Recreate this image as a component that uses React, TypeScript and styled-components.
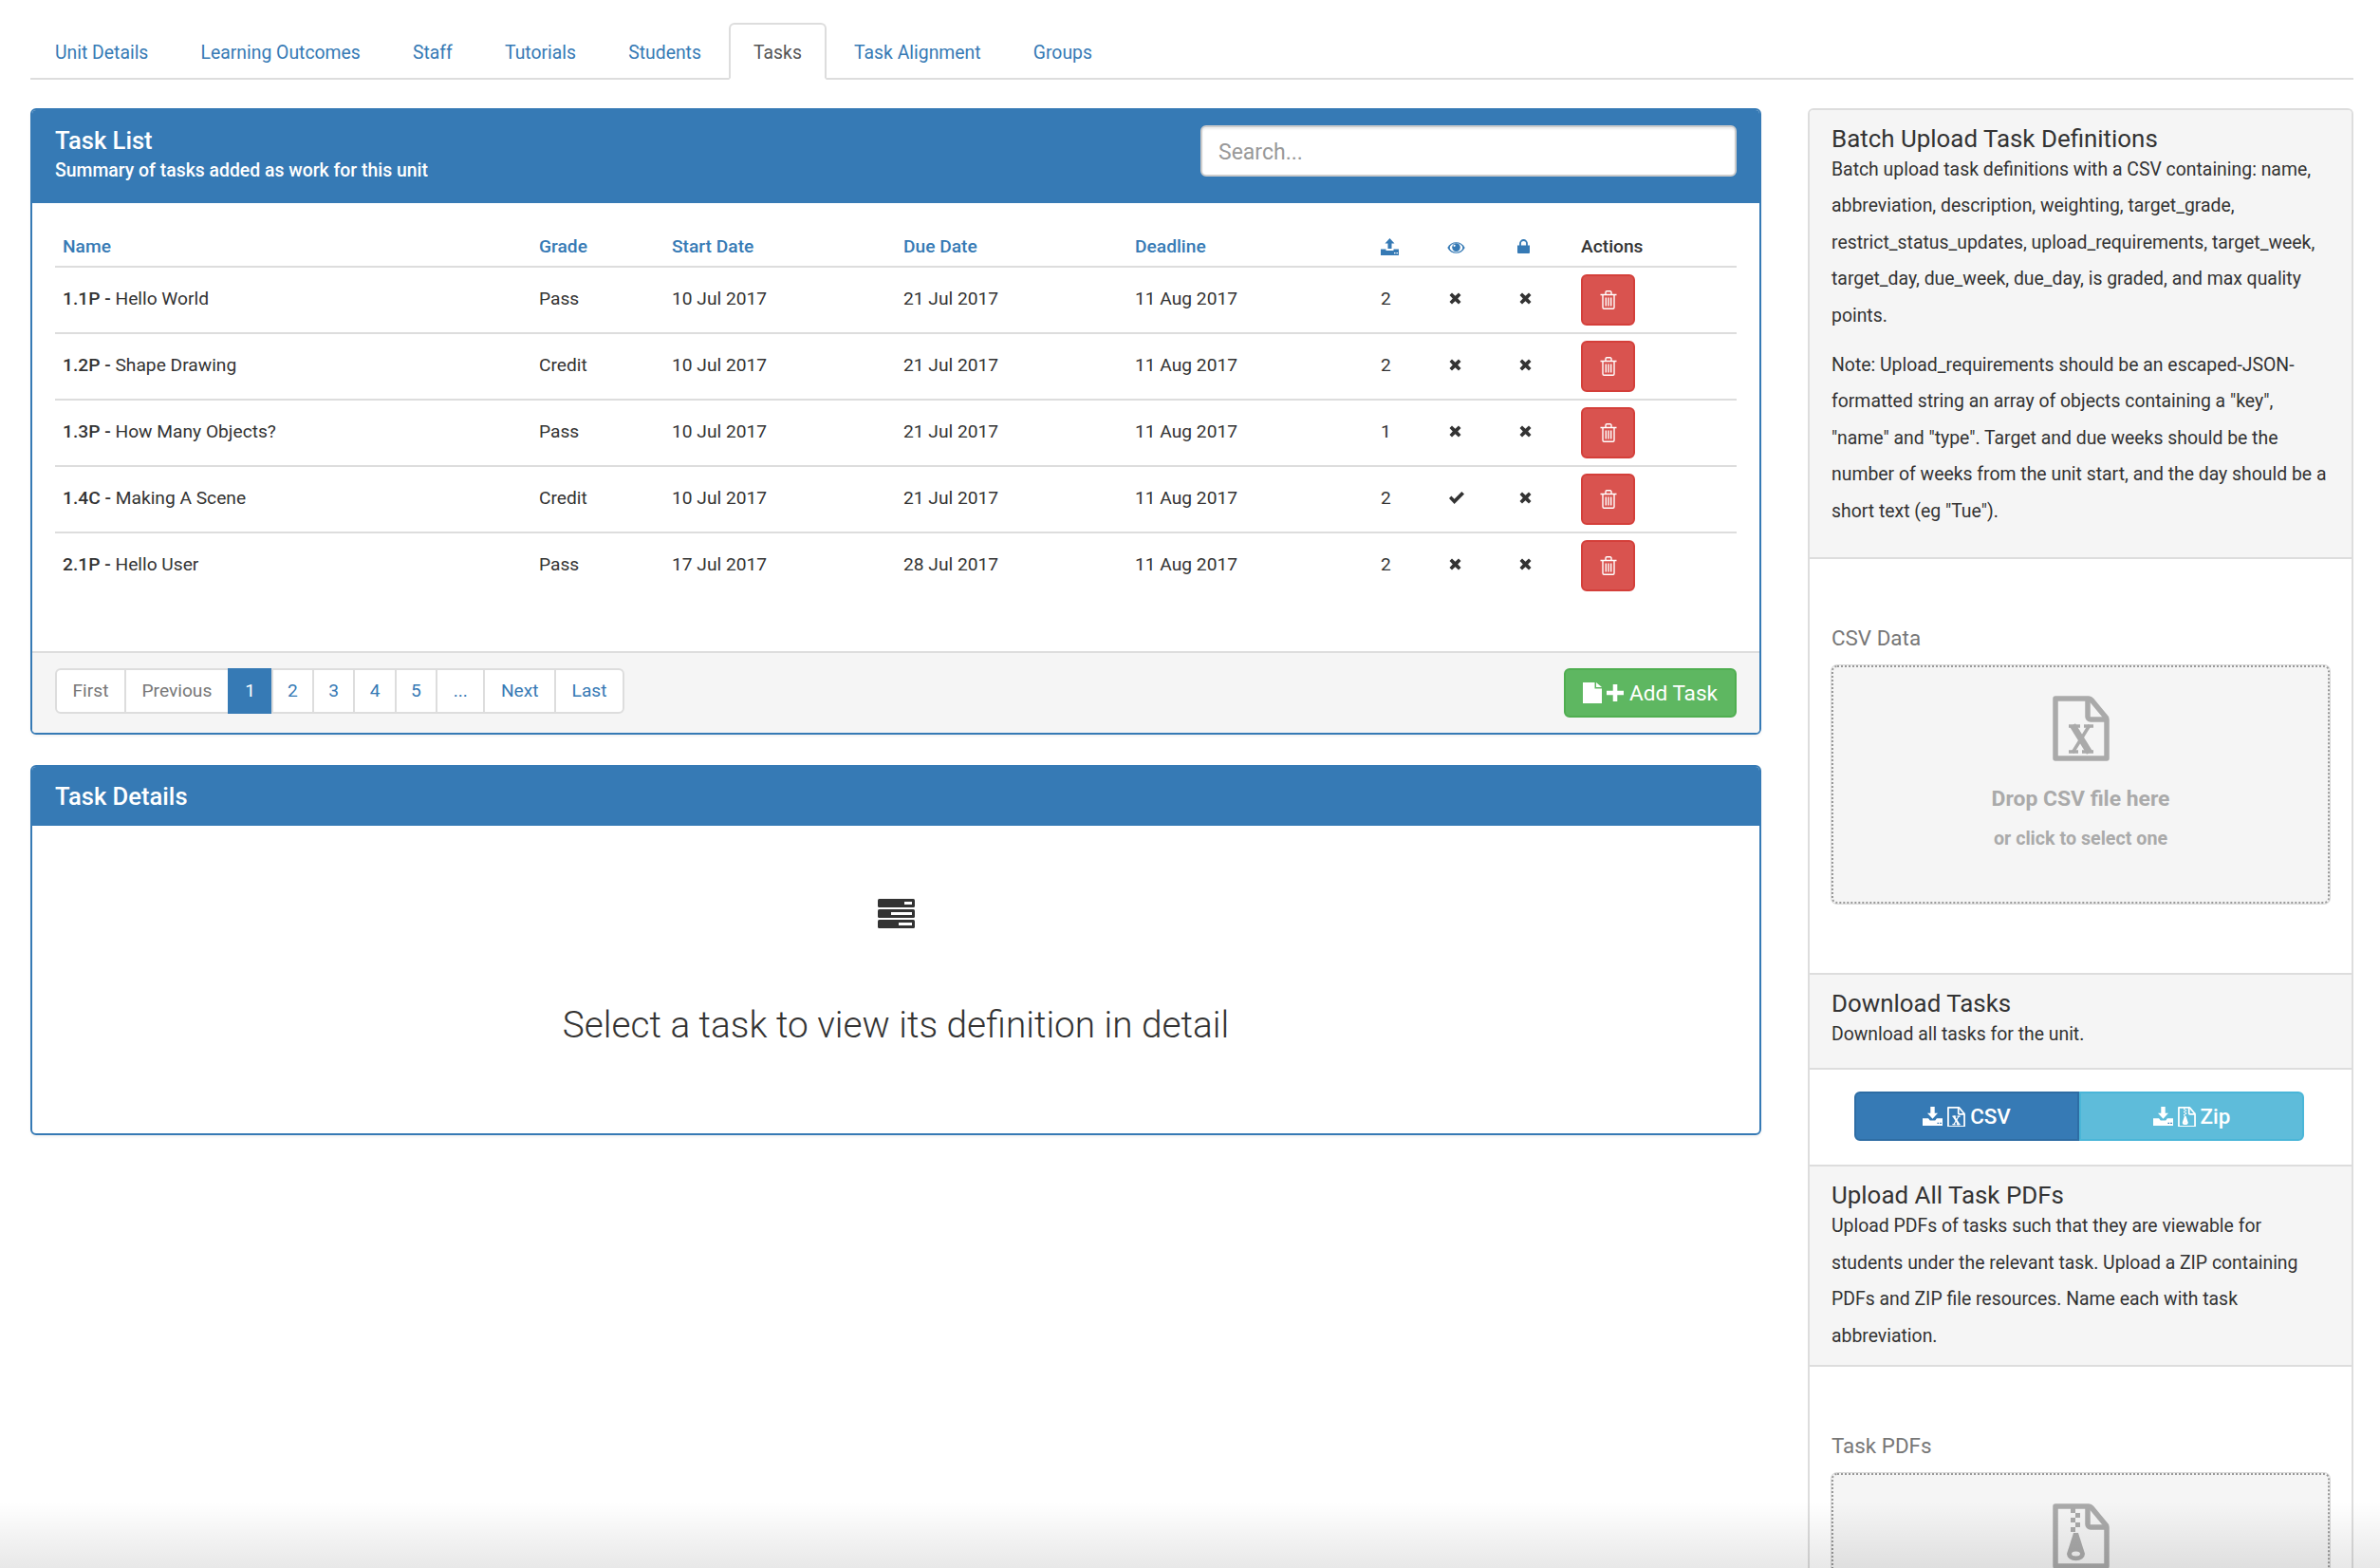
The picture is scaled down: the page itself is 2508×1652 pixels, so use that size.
import React from "react";
import styled, { createGlobalStyle } from "styled-components";

const tabs = ["Unit Details", "Learning Outcomes", "Staff", "Tutorials", "Students", "Tasks", "Task Alignment", "Groups"];

const tasks = [
  { code: "1.1P", name: "Hello World", grade: "Pass", start: "10 Jul 2017", due: "21 Jul 2017", uploads: 2, visible: false },
  { code: "1.2P", name: "Shape Drawing", grade: "Credit", start: "10 Jul 2017", due: "21 Jul 2017", uploads: 2, visible: false },
  { code: "1.3P", name: "How Many Objects?", grade: "Pass", start: "10 Jul 2017", due: "21 Jul 2017", uploads: 1, visible: false },
  { code: "1.4C", name: "Making A Scene", grade: "Credit", start: "10 Jul 2017", due: "21 Jul 2017", uploads: 2, visible: true },
  { code: "2.1P", name: "Hello User", grade: "Pass", start: "17 Jul 2017", due: "28 Jul 2017", uploads: 2, visible: false },
];

const pages: { label: string; state?: "muted" | "active"; tight?: boolean }[] = [
  { label: "First", state: "muted" },
  { label: "Previous", state: "muted" },
  { label: "1", state: "active" },
  { label: "2", tight: true },
  { label: "3", tight: true },
  { label: "4", tight: true },
  { label: "5", tight: true },
  { label: "..." },
  { label: "Next" },
  { label: "Last" },
];

const UploadIcon = () => (
  <svg width="19" height="18" viewBox="0 0 19 18" fill="currentColor">
    <path d="M9.5 0l5 5.5h-3V11h-4V5.5h-3z" />
    <path d="M0 11.5h5.5V13h8v-1.5H19V18H0z" />
    <path d="M14 15h1.5v1.2H14zM16.5 15H18v1.2h-1.5z" fill="#fff" />
  </svg>
);

const SaveIcon = () => (
  <svg width="21" height="20" viewBox="0 0 19 18" fill="currentColor">
    <path d="M9.5 11.5l5-5.500h-3V0h-4v6h-3z" />
    <path d="M0 11h5.500l1.500 2h5l1.500-2H19v7H0z" />
    <path d="M14 15h1.500v1.200H14zM16.500 15H18v1.200h-1.500z" fill="#367ab5" />
  </svg>
);

const EyeIcon = () => (
  <svg width="19" height="12" viewBox="0 0 19 12">
    <path d="M.3 6C4-1.800 15-1.800 18.700 6 15 13.800 4 13.800.3 6z" fill="currentColor" />
    <ellipse cx="9.500" cy="6" rx="6.800" ry="4.700" fill="#fff" />
    <circle cx="9.500" cy="5.600" r="4.300" fill="currentColor" />
    <circle cx="7.600" cy="3.800" r="1.100" fill="#fff" />
  </svg>
);

const LockIcon = () => (
  <svg width="13" height="15" viewBox="0 0 13 15" fill="currentColor">
    <path d="M0 6.500h13V14a1 1 0 0 1-1 1H1a1 1 0 0 1-1-1z" />
    <path d="M3 7V4.500a3.500 3.500 0 0 1 7 0V7" fill="none" stroke="currentColor" strokeWidth="1.800" />
  </svg>
);

const CrossIcon = () => (
  <svg width="13" height="13" viewBox="0 0 13 13" fill="currentColor">
    <path d="M3 .5l3.500 3.300L10 .5l2.500 2.500-3.300 3.500 3.300 3.500-2.500 2.500-3.500-3.300L3 12.500.5 10l3.300-3.500L.5 3z" />
  </svg>
);

const CheckIcon = () => (
  <svg width="16" height="13" viewBox="0 0 16 13" fill="currentColor">
    <path d="M0 7l2.400-2.500 3.200 3.200L13.300 0 16 2.500 5.600 13z" />
  </svg>
);

const TrashIcon = () => (
  <svg width="18" height="20" viewBox="0 0 18 20" fill="none" stroke="#fff" strokeWidth="1.400">
    <path d="M.5 4.500h17M3 4.500V18a1.300 1.300 0 0 0 1.300 1.300h9.400A1.300 1.300 0 0 0 15 18V4.500" />
    <path d="M6 4.500V2a1.200 1.200 0 0 1 1.200-1.200h3.600A1.200 1.200 0 0 1 12 2v2.500" />
    <path d="M6.300 7.500v9M9 7.500v9M11.700 7.500v9" />
  </svg>
);

const NewFileIcon = () => (
  <svg width="20" height="22" viewBox="0 0 20 22" fill="currentColor">
    <path d="M0 0h12.500v6.500H20V22H0z" />
    <path d="M14 0l6 5h-6z" />
  </svg>
);

const PlusIcon = () => (
  <svg width="18" height="18" viewBox="0 0 18 18" fill="currentColor">
    <path d="M6.700 0h4.600v6.700H18v4.600h-6.700V18H6.700v-6.700H0V6.700h6.700z" />
  </svg>
);

const StackIcon = () => (
  <svg width="39" height="31" viewBox="0 0 39 31">
    <rect y="0" width="39" height="9" rx="1.500" fill="#333" />
    <rect y="11" width="39" height="9" rx="1.500" fill="#333" />
    <rect y="22" width="39" height="9" rx="1.500" fill="#333" />
    <rect x="28" y="3" width="8" height="3" fill="#fff" />
    <rect x="14" y="14" width="22" height="3" fill="#fff" />
    <rect x="22" y="25" width="14" height="3" fill="#fff" />
  </svg>
);

const FileOutline = ({ width, children }: { width: number; children: React.ReactNode }) => (
  <svg width={width} height={(width * 69) / 60} viewBox="0 0 60 69" fill="none">
    <path
      d="M3 3h35a4 4 0 0 1 3 1.500L55.500 22a4 4 0 0 1 1.500 3v41H3z"
      stroke="currentColor"
      strokeWidth="5.500"
      strokeLinejoin="round"
    />
    <path d="M37 3v19a3 3 0 0 0 3 3h17" stroke="currentColor" strokeWidth="5.500" />
    {children}
  </svg>
);

const ExcelMark = () => (
  <g stroke="currentColor">
    <path d="M21 31l18 29" strokeWidth="7" />
    <path d="M39 31L21 60" strokeWidth="3.500" />
    <path d="M17 32h12M33 32h10M17 59h10M31 59h12" strokeWidth="3.500" />
  </g>
);

const ZipMark = () => (
  <g fill="currentColor">
    <path d="M19 5h5v5h-5zM24 10h5v5h-5zM19 15h5v5h-5zM24 20h5v5h-5zM19 25h5v5h-5z" />
    <path d="M22 31h5l7 22a8.500 6.500 0 0 1-19 0z" />
    <ellipse cx="24.500" cy="53" rx="4.500" ry="2.500" fill="#f5f5f5" />
  </g>
);

export default function App() {
  return (
    <Page>
      <GlobalStyle />
      <TabBar>
        {tabs.map((tab) => (
          <Tab key={tab} $active={tab === "Tasks"}>
            {tab}
          </Tab>
        ))}
      </TabBar>
      <Columns>
        <Main>
          <Panel>
            <PanelHeading>
              <div>
                <PanelTitle>Task List</PanelTitle>
                <PanelSub>Summary of tasks added as work for this unit</PanelSub>
              </div>
              <Search placeholder="Search..." />
            </PanelHeading>
            <ListBody>
              <Table>
                <thead>
                  <tr>
                    <Th $w={502}>Name</Th>
                    <Th $w={140}>Grade</Th>
                    <Th $w={244}>Start Date</Th>
                    <Th $w={244}>Due Date</Th>
                    <Th $w={259}>Deadline</Th>
                    <Th $w={70} $iconGap={4}>
                      <UploadIcon />
                    </Th>
                    <Th $w={74} $iconGap={6}>
                      <EyeIcon />
                    </Th>
                    <Th $w={67} $iconGap={6}>
                      <LockIcon />
                    </Th>
                    <Th $w={172} $dark>
                      Actions
                    </Th>
                  </tr>
                </thead>
                <tbody>
                  {tasks.map((task) => (
                    <Row key={task.code}>
                      <Td>
                        <Code>{task.code} -</Code> {task.name}
                      </Td>
                      <Td>{task.grade}</Td>
                      <Td>{task.start}</Td>
                      <Td>{task.due}</Td>
                      <Td>11 Aug 2017</Td>
                      <Td>{task.uploads}</Td>
                      <Td>{task.visible ? <CheckIcon /> : <CrossIcon />}</Td>
                      <Td>
                        <CrossIcon />
                      </Td>
                      <ActionTd>
                        <DeleteButton>
                          <TrashIcon />
                        </DeleteButton>
                      </ActionTd>
                    </Row>
                  ))}
                </tbody>
              </Table>
            </ListBody>
            <ListFooter>
              <Pager>
                {pages.map((page) => (
                  <PageItem key={page.label} $state={page.state} $tight={page.tight}>
                    {page.label}
                  </PageItem>
                ))}
              </Pager>
              <AddButton>
                <NewFileIcon />
                <PlusIcon />
                <span>Add Task</span>
              </AddButton>
            </ListFooter>
          </Panel>
          <Panel>
            <DetailsHeading>
              <PanelTitle>Task Details</PanelTitle>
            </DetailsHeading>
            <DetailsBody>
              <StackIcon />
              <DetailsText>Select a task to view its definition in detail</DetailsText>
            </DetailsBody>
          </Panel>
        </Main>
        <Sidebar>
          <SideHead $bottom={29}>
            <SideTitle>Batch Upload Task Definitions</SideTitle>
            <SideText>
              Batch upload task definitions with a CSV containing: name, abbreviation, description, weighting,
              target_grade, restrict_status_updates, upload_requirements, target_week, target_day, due_week, due_day,
              is graded, and max quality points.
            </SideText>
            <SideText>
              Note: Upload_requirements should be an escaped-JSON-formatted string an array of objects containing a
              "key", "name" and "type". Target and due weeks should be the number of weeks from the unit start, and the
              day should be a short text (eg "Tue").
            </SideText>
          </SideHead>
          <DropSection>
            <DropLabel>CSV Data</DropLabel>
            <DropZone>
              <FileOutline width={60}>
                <ExcelMark />
              </FileOutline>
              <DropTitle>Drop CSV file here</DropTitle>
              <DropHint>or click to select one</DropHint>
            </DropZone>
          </DropSection>
          <SideHead $bottom={16}>
            <SideTitle>Download Tasks</SideTitle>
            <SideText>Download all tasks for the unit.</SideText>
          </SideHead>
          <ButtonSection>
            <GroupButton $kind="csv">
              <SaveIcon />
              <FileOutline width={19}>
                <ExcelMark />
              </FileOutline>
              <span>CSV</span>
            </GroupButton>
            <GroupButton $kind="zip">
              <SaveIcon />
              <FileOutline width={19}>
                <ZipMark />
              </FileOutline>
              <span>Zip</span>
            </GroupButton>
          </ButtonSection>
          <SideHead $bottom={11}>
            <SideTitle>Upload All Task PDFs</SideTitle>
            <SideText>
              Upload PDFs of tasks such that they are viewable for students under the relevant task. Upload a ZIP
              containing PDFs and ZIP file resources. Name each with task abbreviation.
            </SideText>
          </SideHead>
          <DropSection>
            <DropLabel>Task PDFs</DropLabel>
            <DropZone>
              <FileOutline width={60}>
                <ZipMark />
              </FileOutline>
            </DropZone>
          </DropSection>
        </Sidebar>
      </Columns>
      <BottomFade />
    </Page>
  );
}

const GlobalStyle = createGlobalStyle`
  html, body {
    margin: 0;
    padding: 0;
    background: #fff;
  }
  * {
    box-sizing: border-box;
  }
`;

const Page = styled.div`
  position: relative;
  height: 1652px;
  overflow: hidden;
  padding: 24px 28px 0 32px;
  font-family: Roboto, "Liberation Sans", sans-serif;
  font-size: 19.2px;
  line-height: 27.4px;
  color: #333;
`;

const TabBar = styled.div`
  display: flex;
  height: 60px;
  border-bottom: 2px solid #ddd;
  margin-bottom: 30px;
`;

const Tab = styled.div<{ $active?: boolean }>`
  height: 60px;
  padding: 16px 24px 0;
  margin-right: 3.2px;
  border: 2px solid ${(p) => (p.$active ? "#ddd" : "transparent")};
  border-bottom-color: ${(p) => (p.$active ? "#fff" : "transparent")};
  border-radius: 6px 6px 0 0;
  background: ${(p) => (p.$active ? "#fff" : "transparent")};
  color: ${(p) => (p.$active ? "#555" : "#367ab5")};
  font-size: 19.36px;
`;

const Columns = styled.div`
  display: grid;
  grid-template-columns: 1824px 575px;
  column-gap: 49px;
  align-items: start;
`;

const Main = styled.div`
  display: flex;
  flex-direction: column;
  gap: 32px;
`;

const Panel = styled.section`
  border: 2px solid #367ab5;
  border-radius: 6px;
  background: #fff;
  box-shadow: 0 2px 3px rgba(0, 0, 0, 0.05);
  overflow: hidden;
`;

const PanelHeading = styled.header`
  display: flex;
  align-items: flex-start;
  justify-content: space-between;
  height: 98px;
  padding: 16px 24px 0;
  background: #367ab5;
  color: #fff;
`;

const PanelTitle = styled.h3`
  margin: 0;
  font-size: 25.6px;
  font-weight: 500;
  line-height: 32px;
`;

const PanelSub = styled.div`
  margin-top: 2px;
  font-size: 19.4px;
  font-weight: 500;
  line-height: 27px;
`;

const Search = styled.input`
  width: 565px;
  height: 54px;
  padding: 2px 17px 0;
  border: 2px solid #ccc;
  border-radius: 6px;
  box-shadow: inset 0 2px 2px rgba(0, 0, 0, 0.075);
  font-family: inherit;
  font-size: 23px;
  color: #555;

  &::placeholder {
    color: #999;
  }
`;

const ListBody = styled.div`
  padding: 24px 24px 56.6px;
`;

const Table = styled.table`
  width: 1772px;
  table-layout: fixed;
  border-collapse: collapse;
`;

const Th = styled.th<{ $w: number; $dark?: boolean; $iconGap?: number }>`
  width: ${(p) => p.$w}px;
  padding: 8px 8px 7px;
  border-bottom: 2px solid #ddd;
  text-align: left;
  vertical-align: bottom;
  font-weight: 500;
  color: ${(p) => (p.$dark ? "#333" : "#367ab5")};

  svg {
    display: block;
    margin-bottom: ${(p) => p.$iconGap ?? 0}px;
  }
`;

const Row = styled.tr`
  height: 70px;
  border-bottom: 2px solid #ddd;

  &:last-child {
    border-bottom: 0;
    height: 68px;
  }
`;

const Td = styled.td`
  padding: 0 8px 3px;
  vertical-align: middle;

  svg {
    display: block;
    margin-left: 1.5px;
  }
`;

const ActionTd = styled.td`
  padding: 0 8px;
  vertical-align: middle;
`;

const Code = styled.strong`
  font-weight: 500;
`;

const DeleteButton = styled.button`
  display: flex;
  align-items: center;
  justify-content: center;
  width: 57px;
  height: 54px;
  padding: 0;
  background: #d9534f;
  border: 2px solid #d43f3a;
  border-radius: 6px;
`;

const ListFooter = styled.footer`
  display: flex;
  align-items: flex-start;
  justify-content: space-between;
  height: 86px;
  padding: 16px 24px 0;
  background: #f5f5f5;
  border-top: 2px solid #ddd;
`;

const Pager = styled.div`
  display: flex;
  height: 48px;
`;

const PageItem = styled.div<{ $state?: "muted" | "active"; $tight?: boolean }>`
  display: flex;
  align-items: center;
  padding: 0 ${(p) => (p.$tight ? 15.3 : 16.5)}px;
  margin-left: -2px;
  border: 2px solid ${(p) => (p.$state === "active" ? "#367ab5" : "#ddd")};
  background: ${(p) => (p.$state === "active" ? "#367ab5" : "#fff")};
  color: ${(p) => (p.$state === "active" ? "#fff" : p.$state === "muted" ? "#777" : "#367ab5")};

  &:first-child {
    margin-left: 0;
    border-radius: 6px 0 0 6px;
  }

  &:last-child {
    border-radius: 0 6px 6px 0;
  }
`;

const AddButton = styled.button`
  display: flex;
  align-items: center;
  gap: 5px;
  height: 52px;
  width: 182px;
  padding: 0 0 0 18px;
  background: #5eb761;
  border: 2px solid #4fae50;
  border-radius: 6px;
  color: #fff;
  font-family: inherit;
  font-size: 22.6px;

  span {
    margin-left: 1px;
  }
`;

const DetailsHeading = styled.header`
  display: flex;
  align-items: center;
  height: 62px;
  padding: 0 24px;
  background: #367ab5;
  color: #fff;
`;

const DetailsBody = styled.div`
  display: flex;
  flex-direction: column;
  align-items: center;
  padding: 77px 0 93px;

  svg {
    display: block;
  }
`;

const DetailsText = styled.div`
  margin-top: 81px;
  font-size: 38.75px;
  font-weight: 300;
  line-height: 42px;
`;

const Sidebar = styled.aside`
  border: 2px solid #ddd;
  border-bottom: 0;
  border-radius: 6px 6px 0 0;
  overflow: hidden;
`;

const SideHead = styled.div<{ $bottom: number }>`
  padding: 16px 23px ${(p) => p.$bottom}px;
  background: #f5f5f5;
  border-bottom: 2px solid #ddd;
`;

const SideTitle = styled.h3`
  margin: 0;
  font-size: 25.9px;
  font-weight: 400;
  line-height: 28px;
`;

const SideText = styled.p`
  margin: 0;
  font-size: 19.4px;
  line-height: 38.4px;

  & + & {
    margin-top: 14px;
  }
`;

const DropSection = styled.div`
  padding: 69px 23px 73px;
  border-bottom: 2px solid #ddd;
`;

const DropLabel = styled.div`
  font-size: 22.4px;
  line-height: 28px;
  color: #777;
  margin-bottom: 15px;
`;

const DropZone = styled.div`
  display: flex;
  flex-direction: column;
  align-items: center;
  height: 251px;
  padding-top: 30px;
  background: #f5f5f5;
  border: 2px dotted #999;
  border-radius: 6px;
  box-shadow: 0 0 0 1px rgba(170, 170, 170, 0.45);
  color: #aaa;
  font-weight: 700;
  text-align: center;
`;

const DropTitle = styled.div`
  margin-top: 25px;
  font-size: 22.9px;
  line-height: 30px;
`;

const DropHint = styled.div`
  margin-top: 13px;
  font-size: 19.7px;
  line-height: 27px;
`;

const ButtonSection = styled.div`
  display: flex;
  padding: 23px 50px 25px 47px;
  border-bottom: 2px solid #ddd;
`;

const GroupButton = styled.button<{ $kind: "csv" | "zip" }>`
  flex: 1;
  display: flex;
  align-items: center;
  justify-content: center;
  gap: 5px;
  height: 52px;
  padding: 0;
  background: ${(p) => (p.$kind === "csv" ? "#367ab5" : "#5ebcda")};
  border: 2px solid ${(p) => (p.$kind === "csv" ? "#2e6da4" : "#4ab6d8")};
  border-radius: ${(p) => (p.$kind === "csv" ? "6px 0 0 6px" : "0 6px 6px 0")};
  color: #fff;
  font-family: inherit;
  font-size: 22.4px;
  font-weight: 500;
`;

const BottomFade = styled.div`
  position: absolute;
  left: 0;
  right: 0;
  bottom: 0;
  height: 70px;
  background: linear-gradient(to bottom, rgba(0, 0, 0, 0), rgba(0, 0, 0, 0.09));
  pointer-events: none;
`;
